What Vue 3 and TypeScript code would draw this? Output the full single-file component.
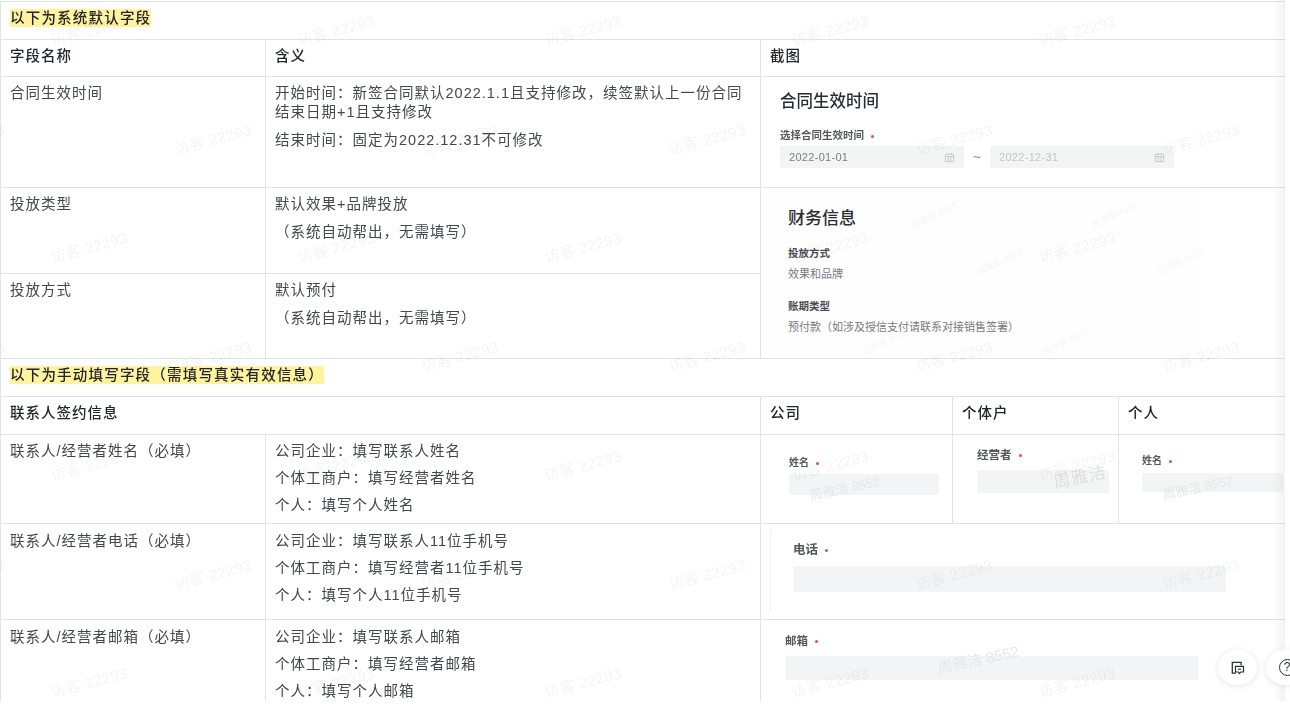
<template>
  <div class="page">
    <div class="doc">
      <table class="sheet">
        <colgroup>
          <col style="width: 265px" />
          <col style="width: 495px" />
          <col style="width: 192px" />
          <col style="width: 166px" />
          <col style="width: 182px" />
        </colgroup>
        <tbody>
          <tr class="r38">
            <td colspan="5" class="strong"><mark>以下为系统默认字段</mark></td>
          </tr>
          <tr class="r37">
            <td class="strong">字段名称</td>
            <td class="strong">含义</td>
            <td colspan="3" class="strong">截图</td>
          </tr>
          <tr class="r111">
            <td>合同生效时间</td>
            <td>
              <p>开始时间：新签合同默认2022.1.1且支持修改，续签默认上一份合同结束日期+1且支持修改</p>
              <p class="gap">结束时间：固定为2022.12.31不可修改</p>
            </td>
            <td colspan="3" class="shot">
              <div class="contract">
                <h3>合同生效时间</h3>
                <div class="mini-label wide">选择合同生效时间<i class="req"></i></div>
                <div class="range">
                  <div class="date">
                    <span>2022-01-01</span>
                    <svg viewBox="0 0 12 12" width="11" height="11"><path d="M1.5 2.5h9v8h-9zM1.5 5h9M4.5 5v5.5M7.5 5v5.5M4 1v2M8 1v2" fill="none" stroke="#c4c6ca" stroke-width="1" /></svg>
                  </div>
                  <span class="tilde">~</span>
                  <div class="date dim">
                    <span>2022-12-31</span>
                    <svg viewBox="0 0 12 12" width="11" height="11"><path d="M1.5 2.5h9v8h-9zM1.5 5h9M4.5 5v5.5M7.5 5v5.5M4 1v2M8 1v2" fill="none" stroke="#c4c6ca" stroke-width="1" /></svg>
                  </div>
                </div>
              </div>
            </td>
          </tr>
          <tr class="r86">
            <td>投放类型</td>
            <td>
              <p>默认效果+品牌投放</p>
              <p class="gap">（系统自动帮出，无需填写）</p>
            </td>
            <td colspan="3" rowspan="2" class="shot">
              <div class="finance">
                <span v-for="m in financeMarks" :key="m.x + '-' + m.y" class="inner-mark" :style="{ left: m.x + 'px', top: m.y + 'px' }">成海俊 4315</span>
                <h3>财务信息</h3>
                <div class="fin-label">投放方式</div>
                <div class="fin-value">效果和品牌</div>
                <div class="fin-label second">账期类型</div>
                <div class="fin-value">预付款（如涉及授信支付请联系对接销售签署）</div>
              </div>
            </td>
          </tr>
          <tr class="r85">
            <td>投放方式</td>
            <td>
              <p>默认预付</p>
              <p class="gap">（系统自动帮出，无需填写）</p>
            </td>
          </tr>
          <tr class="r38">
            <td colspan="5" class="strong"><mark>以下为手动填写字段（需填写真实有效信息）</mark></td>
          </tr>
          <tr class="r38">
            <td colspan="2" class="strong">联系人签约信息</td>
            <td class="strong">公司</td>
            <td class="strong">个体户</td>
            <td class="strong">个人</td>
          </tr>
          <tr class="r89">
            <td>联系人/经营者姓名（必填）</td>
            <td>
              <p v-for="line in nameLines" :key="line" class="stack">{{ line }}</p>
            </td>
            <td class="shot">
              <div class="name-a">
                <div class="mini-label">姓名<i class="req"></i></div>
                <div class="blank"><span class="ghost">周雅洁 8552</span></div>
              </div>
            </td>
            <td class="shot">
              <div class="name-b">
                <div class="mid-label">经营者<i class="req"></i></div>
                <div class="blank"><span class="ghost big">周雅洁</span></div>
              </div>
            </td>
            <td class="shot">
              <div class="name-c">
                <div class="mini-label">姓名<i class="req"></i></div>
                <div class="blank"><span class="ghost">周雅洁 8552</span></div>
              </div>
            </td>
          </tr>
          <tr class="r96">
            <td>联系人/经营者电话（必填）</td>
            <td>
              <p v-for="line in phoneLines" :key="line" class="stack">{{ line }}</p>
            </td>
            <td colspan="3" class="shot">
              <div class="phone">
                <div class="big-label">电话<i class="req"></i></div>
                <div class="blank"></div>
              </div>
            </td>
          </tr>
          <tr class="r96">
            <td>联系人/经营者邮箱（必填）</td>
            <td>
              <p v-for="line in mailLines" :key="line" class="stack">{{ line }}</p>
            </td>
            <td colspan="3" class="shot">
              <div class="mail">
                <div class="mid-label">邮箱<i class="req"></i></div>
                <div class="blank"><span class="ghost wide">周雅洁 8552</span></div>
              </div>
            </td>
          </tr>
        </tbody>
      </table>

      <!-- page watermark -->
      <div class="marks">
        <span v-for="m in marks" :key="m.x + '-' + m.y" class="mark" :style="{ left: m.x + 'px', top: m.y + 'px' }">访客 22293</span>
      </div>
      <div class="edge"></div>
    </div>

    <button class="float-btn feedback" aria-label="反馈">
      <svg viewBox="0 0 20 20" width="17" height="16">
        <path d="M8 16.5H3.5V3h11v3.5" fill="none" stroke="#2b2f36" stroke-width="1.6" />
        <path d="M7.5 8h10v7h-3.5l-1.5 2-1.5-2H7.5z" fill="none" stroke="#2b2f36" stroke-width="1.5" />
        <path d="M10.5 11.5h4" stroke="#2b2f36" stroke-width="1.4" />
      </svg>
    </button>
    <button class="float-btn help" aria-label="帮助">
      <span>?</span>
    </button>
  </div>
</template>

<script setup lang="ts">
import { computed } from 'vue'

interface Mark {
  x: number
  y: number
}

const nameLines = ['公司企业：填写联系人姓名', '个体工商户：填写经营者姓名', '个人：填写个人姓名']
const phoneLines = ['公司企业：填写联系人11位手机号', '个体工商户：填写经营者11位手机号', '个人：填写个人11位手机号']
const mailLines = ['公司企业：填写联系人邮箱', '个体工商户：填写经营者邮箱', '个人：填写个人邮箱']

// staggered watermark grid, every other row shifted by half a period
const marks = computed<Mark[]>(() => {
  const list: Mark[] = []
  for (let row = 0; row < 7; row++) {
    const start = row % 2 === 0 ? 51 : -72
    for (let col = 0; col < 7; col++) {
      const x = start + col * 247
      if (x < 1250) list.push({ x, y: 31 + row * 108.7 })
    }
  }
  return list
})

const financeMarks: Mark[] = [
  { x: 140, y: 15 },
  { x: 320, y: 15 },
  { x: 205, y: 62 },
  { x: 385, y: 62 },
  { x: 90, y: 142 },
  { x: 270, y: 142 }
]
</script>

<style>
html,
body {
  margin: 0;
  background: #fff;
  overflow: hidden;
}
</style>

<style scoped>
.page {
  position: relative;
  width: 1290px;
  height: 710px;
  overflow: hidden;
  background: #fff;
  font-family: "Liberation Sans", "Noto Sans CJK SC", sans-serif;
  color: #44474d;
}

.doc {
  position: relative;
  width: 1285px;
  height: 701px;
  padding-top: 1px;
  box-sizing: border-box;
  overflow: hidden;
  filter: blur(0.45px);
}

.sheet {
  width: 1300px;
  table-layout: fixed;
  border-collapse: collapse;
  font-size: 14.5px;
  letter-spacing: 1px;
  line-height: 19px;
}

.sheet td {
  border: 1px solid #e2e3e7;
  padding: 7px 9px;
  vertical-align: top;
}

.sheet td.shot {
  padding: 0;
  position: relative;
  letter-spacing: 0;
}

.r38 { height: 38px; }
.r37 { height: 37px; }
.r111 { height: 111px; }
.r86 { height: 86px; }
.r85 { height: 85px; }
.r89 { height: 89px; }
.r96 { height: 96px; }

.r96 td:not(.shot) {
  padding-top: 8px;
}

.strong {
  font-weight: 500;
  color: #22252b;
}

mark {
  background: #fff39f;
  color: inherit;
  padding: 1px 0;
  letter-spacing: 1.2px;
}

p {
  margin: 0;
}

.gap {
  margin-top: 9px;
}

.stack + .stack {
  margin-top: 8px;
}

h3 {
  margin: 0;
  font-weight: 500;
  color: #2a2d33;
}

.req {
  display: inline-block;
  width: 3px;
  height: 3px;
  margin-left: 7px;
  border-radius: 50%;
  background: #f04848;
  vertical-align: middle;
}

.mini-label {
  font-size: 10px;
  line-height: 14px;
  font-weight: 700;
  color: #55585d;
}

.mini-label.wide {
  font-size: 10.5px;
}

.mid-label {
  font-size: 11.5px;
  line-height: 16px;
  font-weight: 700;
  color: #55585d;
}

.big-label {
  font-size: 12.5px;
  line-height: 18px;
  font-weight: 700;
  color: #55585d;
}

.blank {
  position: relative;
  border-radius: 2px;
  background: #f3f4f5;
}

.ghost {
  position: absolute;
  left: 20px;
  top: 5px;
  font-size: 13px;
  white-space: nowrap;
  color: #e6e7e9;
  transform: rotate(-12deg);
}

.ghost.big {
  left: 76px;
  top: -2px;
  font-size: 17px;
  letter-spacing: 1px;
  color: #dedfe1;
}

.ghost.wide {
  left: 152px;
  top: -6px;
  font-size: 15px;
}

.contract {
  padding: 14px 0 0 19px;
}

.contract h3 {
  font-size: 16.5px;
  line-height: 20px;
}

.contract .mini-label {
  margin-top: 17px;
}

.range {
  display: flex;
  align-items: center;
  margin-top: 4px;
}

.date {
  display: flex;
  align-items: center;
  justify-content: space-between;
  width: 184px;
  height: 22px;
  padding: 0 9px;
  box-sizing: border-box;
  border-radius: 2px;
  background: #f3f4f5;
  font-size: 11px;
  letter-spacing: 0.3px;
  color: #7b7e83;
}

.date.dim {
  color: #c2c4c7;
}

.tilde {
  width: 26px;
  text-align: center;
  font-size: 14px;
  color: #8a8d92;
}

.finance {
  position: relative;
  margin: 3px 0 0 9px;
  width: 430px;
  height: 165px;
  padding: 17px 0 0 18px;
  box-sizing: border-box;
  background: #fefefe;
}

.finance h3 {
  font-size: 17px;
  line-height: 22px;
}

.fin-label {
  margin-top: 16px;
  font-size: 10.5px;
  line-height: 14px;
  font-weight: 700;
  color: #4a4d52;
}

.fin-label.second {
  margin-top: 18px;
}

.fin-value {
  margin-top: 7px;
  font-size: 11px;
  line-height: 14px;
  color: #777a7f;
}

.inner-mark {
  position: absolute;
  font-size: 9px;
  color: #f5f6f6;
  white-space: nowrap;
  transform: rotate(-25deg);
}

.name-a {
  padding: 21px 13px 0 28px;
}

.name-a .blank {
  height: 21px;
  margin-top: 4px;
}

.name-b {
  padding: 12px 9px 0 24px;
}

.name-b .blank {
  height: 23px;
  margin-top: 7px;
}

.name-c {
  padding: 19px 0 0 23px;
}

.name-c .blank {
  width: 141px;
  height: 19px;
  margin-top: 5px;
}

.phone {
  margin: 7px 0 0 9px;
  height: 80px;
  padding: 10px 0 0 22px;
  box-sizing: border-box;
  border-left: 1px solid #eeeff0;
}

.phone .blank {
  width: 433px;
  height: 26px;
  margin-top: 7px;
}

.mail {
  padding: 13px 0 0 24px;
}

.mail .blank {
  width: 414px;
  height: 24px;
  margin-top: 7px;
}

.marks {
  position: absolute;
  inset: 0;
  pointer-events: none;
}

.mark {
  position: absolute;
  font-size: 15px;
  line-height: 20px;
  letter-spacing: 0.4px;
  white-space: nowrap;
  color: rgba(30, 35, 45, 0.05);
  transform: rotate(-15deg);
  transform-origin: left center;
}

.edge {
  position: absolute;
  top: 0;
  right: 0;
  bottom: 0;
  width: 11px;
  background: linear-gradient(to right, rgba(0, 0, 0, 0), rgba(0, 0, 0, 0.05));
}

.float-btn {
  position: absolute;
  top: 650px;
  display: flex;
  align-items: center;
  justify-content: center;
  width: 39px;
  height: 35px;
  padding: 0;
  border: none;
  border-radius: 50%;
  background: #fff;
  box-shadow: 0 1px 7px rgba(0, 0, 0, 0.1);
}

.feedback {
  left: 1218px;
}

.help {
  left: 1266px;
}

.help span {
  width: 15px;
  height: 15px;
  margin-left: 3px;
  border: 1.4px solid #2b2f36;
  border-radius: 50%;
  font-size: 12px;
  line-height: 15px;
  color: #2b2f36;
  font-family: "Liberation Sans", sans-serif;
}
</style>
